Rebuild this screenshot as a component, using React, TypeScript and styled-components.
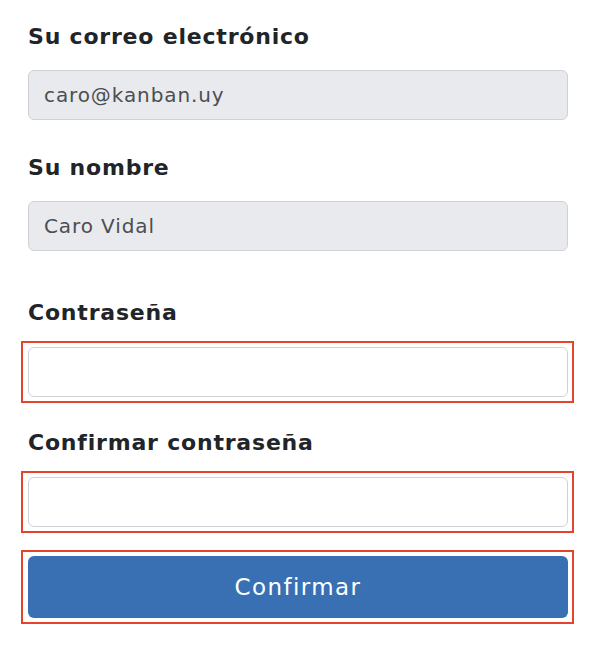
import styled, { createGlobalStyle } from 'styled-components'

const GlobalStyle = createGlobalStyle`
  * {
    box-sizing: border-box;
  }
  body {
    margin: 0;
    background: #ffffff;
    font-family: 'DejaVu Sans', 'Noto Sans', sans-serif;
    color: #212428;
  }
`

type FieldProps = {
  label: string
  value?: string
  disabled?: boolean
  error?: boolean
  gapAfter: number
}

const Field = ({ label, value, disabled, error, gapAfter }: FieldProps) => {
  const input = <Input type="text" defaultValue={value} readOnly={disabled} $disabled={disabled} />
  return (
    <StyledField $gapAfter={gapAfter} $error={error}>
      <Label>{label}</Label>
      {error ? <ErrorFrame>{input}</ErrorFrame> : input}
    </StyledField>
  )
}

export default function App() {
  return (
    <>
      <GlobalStyle />
      <Form onSubmit={(e) => e.preventDefault()}>
        <Field label="Su correo electrónico" value="caro@kanban.uy" disabled gapAfter={32} />
        <Field label="Su nombre" value="Caro Vidal" disabled gapAfter={46} />
        <Field label="Contraseña" error gapAfter={24} />
        <Field label="Confirmar contraseña" error gapAfter={17} />
        <ErrorFrame>
          <Button type="submit">Confirmar</Button>
        </ErrorFrame>
      </Form>
    </>
  )
}

const Form = styled.form`
  display: flex;
  flex-direction: column;
  padding: 21px 30px 0 28px;
`

const StyledField = styled.div<{ $gapAfter: number; $error?: boolean }>`
  display: flex;
  flex-direction: column;
  gap: ${(p) => (p.$error ? '12px' : '17px')};
  margin-bottom: ${(p) => p.$gapAfter}px;
`

const Label = styled.label`
  font-size: 22px;
  line-height: 32px;
  font-weight: 700;
  letter-spacing: 0.8px;
  color: #212428;
`

const ErrorFrame = styled.div`
  margin: 0 -6px 0 -7px;
  padding: 4px 4px 4px 5px;
  border: 2px solid #e5432b;
`

const Input = styled.input<{ $disabled?: boolean }>`
  width: 100%;
  height: 50px;
  padding: 0 15px;
  border: 1px solid #ced2d7;
  border-radius: 6px;
  background: ${(p) => (p.$disabled ? '#e9eaee' : '#ffffff')};
  color: #4b4e53;
  font-family: inherit;
  font-size: 20px;
  letter-spacing: 0.9px;
  outline: none;
`

const Button = styled.button`
  display: block;
  width: 100%;
  height: 62px;
  border: none;
  border-radius: 6px;
  background: #3870b3;
  color: #ffffff;
  font-family: inherit;
  font-size: 23px;
  letter-spacing: 1.4px;
  cursor: pointer;
`
